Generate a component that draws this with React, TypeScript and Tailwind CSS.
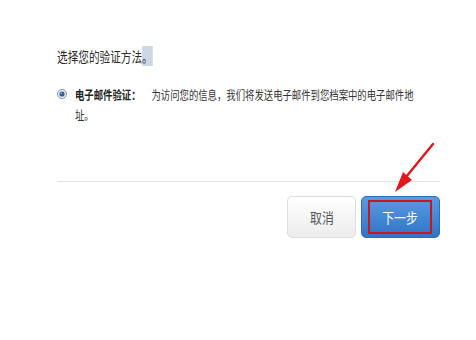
const RadioDot = () => (
  <svg width="10" height="10" viewBox="0 0 10 10" className="shrink-0">
    <circle cx="5" cy="5" r="4.5" fill="#e8edf3" stroke="#8a98a8" strokeWidth="1" />
    <circle cx="5" cy="5" r="2.6" fill="#2d5e9c" />
    <circle cx="4.3" cy="4.3" r="0.9" fill="#8fb3df" />
  </svg>
);

const Arrow = () => (
  <svg
    width="476"
    height="340"
    viewBox="0 0 476 340"
    className="absolute left-0 top-0 pointer-events-none"
  >
    <line x1="433" y1="144" x2="406" y2="177" stroke="#e3161b" strokeWidth="2.4" strokeLinecap="round" />
    <polygon points="395,192 412,180 403,172" fill="#e3161b" />
  </svg>
);

export default function App() {
  return (
    <div className="relative w-[476px] h-[340px] bg-white text-[#2a2a2a] font-['Noto_Sans_CJK_SC','Microsoft_YaHei',sans-serif]">
      <div className="flex flex-col pl-[57px] pr-[36px] pt-[46px]">
        <div className="h-[18px] leading-[18px] whitespace-nowrap">
          <span className="inline-block text-[14px] scale-x-[0.76] origin-left">
            选择您的验证方法<span className="bg-[#cdd7e5]">。</span>
          </span>
        </div>

        <div className="flex items-start mt-[21px]">
          <div className="h-[20px] flex items-center mr-[8px] mt-[-1px]">
            <RadioDot />
          </div>
          <div className="inline-block whitespace-nowrap text-[12px] leading-[20px] text-[#333] scale-x-[0.78] origin-left">
            <span className="font-bold text-[#1e1e1e]">电子邮件验证：</span>
            <span className="ml-[14px]">为访问您的信息，我们将发送电子邮件到您档案中的电子邮件地</span>
            <br />
            址。
          </div>
        </div>

        <div className="mt-[56px] h-px bg-[#e4e4e4]" />

        <div className="flex justify-end gap-[5px] mt-[14px]">
          <button className="w-[69px] h-[42px] rounded-[5px] border border-[#dcdcdc] bg-gradient-to-b from-white to-[#ececec] text-[#555] text-[14px]">
            <span className="inline-block scale-x-[0.85]">取消</span>
          </button>
          <button className="w-[79px] h-[42px] rounded-[5px] border border-[#2d6fb8] bg-gradient-to-b from-[#5a9be0] to-[#2f74c8] p-[3px] pl-[6px] pr-[7px]">
            <div className="w-full h-full border-2 border-[#c8161d] flex items-center justify-center text-white text-[14px]">
              <span className="inline-block scale-x-[0.85]">下一步</span>
            </div>
          </button>
        </div>
      </div>
      <Arrow />
    </div>
  );
}
